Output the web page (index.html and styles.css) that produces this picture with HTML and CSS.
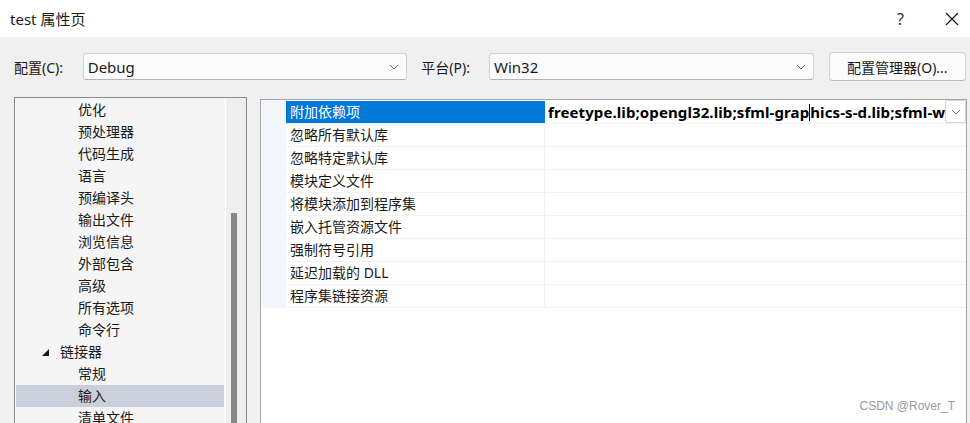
FILE: index.html
```html
<!DOCTYPE html>
<html lang="zh">
<head>
  <meta charset="UTF-8" />
  <title>test 属性页</title>
  <link rel="stylesheet" href="styles.css">
</head>
<body>
  <div class="dialog">
    <div class="titlebar">
      <span class="title">test 属性页</span>
      <span class="help">?</span>
      <svg class="close" width="14" height="14" viewBox="0 0 14 14"><path d="M1 1L13 13M13 1L1 13" stroke="#1a1a1a" stroke-width="1.2" fill="none"/></svg>
    </div>

    <div class="toolbar">
      <label class="lbl">配置(C):</label>
      <div class="select">
        <span>Debug</span>
        <svg width="10" height="6" viewBox="0 0 10 6"><path d="M1 1L5 5L9 1" stroke="#666" fill="none"/></svg>
      </div>
      <label class="lbl lbl-platform">平台(P):</label>
      <div class="select">
        <span>Win32</span>
        <svg width="10" height="6" viewBox="0 0 10 6"><path d="M1 1L5 5L9 1" stroke="#666" fill="none"/></svg>
      </div>
      <button class="btn">配置管理器(O)...</button>
    </div>

    <div class="main">
      <div class="tree">
        <ul class="tree-list">
          <li class="child">优化</li>
          <li class="child">预处理器</li>
          <li class="child">代码生成</li>
          <li class="child">语言</li>
          <li class="child">预编译头</li>
          <li class="child">输出文件</li>
          <li class="child">浏览信息</li>
          <li class="child">外部包含</li>
          <li class="child">高级</li>
          <li class="child">所有选项</li>
          <li class="child">命令行</li>
          <li class="group"><span class="tri"></span>链接器</li>
          <li class="child">常规</li>
          <li class="child selected">输入</li>
          <li class="child">清单文件</li>
        </ul>
        <div class="scrollbar"><div class="thumb"></div></div>
      </div>

      <div class="grid">
        <div class="gutter"></div>
        <div class="rows">
          <div class="row active">
            <div class="name">附加依赖项</div>
            <div class="value">freetype.lib;opengl32.lib;sfml-grap<span class="caret"></span>hics-s-d.lib;sfml-w</div>
            <div class="drop"><svg width="10" height="6" viewBox="0 0 10 6"><path d="M1 1L5 5L9 1" stroke="#777" fill="none"/></svg></div>
          </div>
          <div class="row"><div class="name">忽略所有默认库</div><div class="value"></div></div>
          <div class="row"><div class="name">忽略特定默认库</div><div class="value"></div></div>
          <div class="row"><div class="name">模块定义文件</div><div class="value"></div></div>
          <div class="row"><div class="name">将模块添加到程序集</div><div class="value"></div></div>
          <div class="row"><div class="name">嵌入托管资源文件</div><div class="value"></div></div>
          <div class="row"><div class="name">强制符号引用</div><div class="value"></div></div>
          <div class="row"><div class="name">延迟加载的 DLL</div><div class="value"></div></div>
          <div class="row"><div class="name">程序集链接资源</div><div class="value"></div></div>
        </div>
      </div>
    </div>

    <div class="watermark">CSDN @Rover_T</div>
  </div>
</body>
</html>
```

FILE: styles.css
```css
body {
  margin: 0;
  padding: 0;
  font-family: "Noto Sans", "Noto Sans CJK SC", sans-serif;
  color: #1a1a1a;
  background: #f0f0f0;
}
.dialog {
  width: 970px;
  height: 423px;
  overflow: hidden;
  position: relative;
  background: #f0f0f0;
}
.titlebar {
  height: 37px;
  background: #fff;
  display: flex;
  align-items: center;
  padding-left: 10px;
  font-size: 15px;
}
.title { flex: 1; }
.help {
  font-size: 16px;
  margin-right: 41px;
  color: #333;
}
.close { margin-right: 11px; }

.toolbar {
  display: flex;
  align-items: center;
  padding: 15px 4px 0 14px;
  height: 29px;
  font-size: 14px;
}
.lbl { width: 69px; }
.lbl-platform { width: 68px; margin-left: 14px; }
.select {
  height: 25px;
  width: 313px;
  background: #fbfbfb;
  border: 1px solid #cfcfcf;
  border-bottom-color: #b5b5b5;
  border-radius: 3px;
  display: flex;
  align-items: center;
  justify-content: space-between;
  padding: 0 7px 0 4px;
  font-size: 15px;
}
.btn {
  margin-left: 15px;
  width: 138px;
  height: 29px;
  background: #fbfbfb;
  border: 1px solid #d0d0d0;
  border-bottom-color: #bababa;
  border-radius: 4px;
  font-family: "Noto Sans", "Noto Sans CJK SC", sans-serif;
  font-size: 14px;
  color: #1a1a1a;
  padding: 0;
}

.main {
  display: flex;
  align-items: flex-start;
  margin-top: 16px;
  padding-left: 14px;
}
.tree {
  width: 231px;
  height: 340px;
  border: 1px solid #868b94;
  border-bottom: none;
  background: #f5f5f5;
  display: flex;
  font-size: 14px;
}
.tree-list {
  list-style: none;
  margin: 1px 0 0 1px;
  padding: 0;
  width: 208px;
}
.tree-list li {
  height: 22px;
  line-height: 22px;
  white-space: nowrap;
}
.child { padding-left: 62px; }
.group {
  padding-left: 26px;
  display: flex;
  align-items: center;
}
.tri {
  width: 0;
  height: 0;
  border-left: 7px solid transparent;
  border-bottom: 7px solid #1a1a1a;
  margin-right: 11px;
}
.selected { background: #cbcfdc; }
.scrollbar {
  width: 20px;
  margin-left: 1px;
  border-left: 1px solid #fff;
  background: #eeeeee;
  position: relative;
}
.thumb {
  position: absolute;
  left: 5px;
  top: 115px;
  width: 6px;
  bottom: 0;
  background: #888888;
}

.grid {
  margin-left: 13px;
  margin-top: 2px;
  width: 705px;
  height: 340px;
  border: 1px solid #a5a5a5;
  border-bottom: none;
  background: #fff;
  display: flex;
  align-items: flex-start;
}
.gutter {
  flex-shrink: 0;
  width: 25px;
  height: 208px;
  background: #f3f6fb;
}
.rows {
  flex: 1;
  min-width: 0;
  padding-top: 1px;
}
.row {
  display: flex;
  height: 22px;
  border-bottom: 1px solid #f2f2f2;
  font-size: 14px;
}
.name {
  flex-shrink: 0;
  width: 254px;
  padding-left: 4px;
  line-height: 22px;
  border-right: 1px solid #f2f2f2;
  white-space: nowrap;
}
.value {
  flex: 1;
  min-width: 0;
  line-height: 22px;
  padding-left: 3px;
  font-weight: bold;
  font-size: 15px;
  letter-spacing: 0.1px;
  white-space: nowrap;
  overflow: hidden;
  color: #000;
}
.active .name {
  background: #0078d7;
  color: #fff;
  border-right-color: #0078d7;
}
.caret {
  display: inline-block;
  width: 1px;
  height: 17px;
  background: #000;
  vertical-align: -3px;
}
.drop {
  flex-shrink: 0;
  width: 19px;
  height: 21px;
  border: 1px solid #d6d6d6;
  border-radius: 2px;
  background: #fff;
  display: flex;
  align-items: center;
  justify-content: center;
  margin-top: -1px;
}
.watermark {
  position: absolute;
  right: 15px;
  top: 399px;
  font-size: 12px;
  color: #9a9a9a;
  font-family: "Liberation Sans", sans-serif;
}
```
